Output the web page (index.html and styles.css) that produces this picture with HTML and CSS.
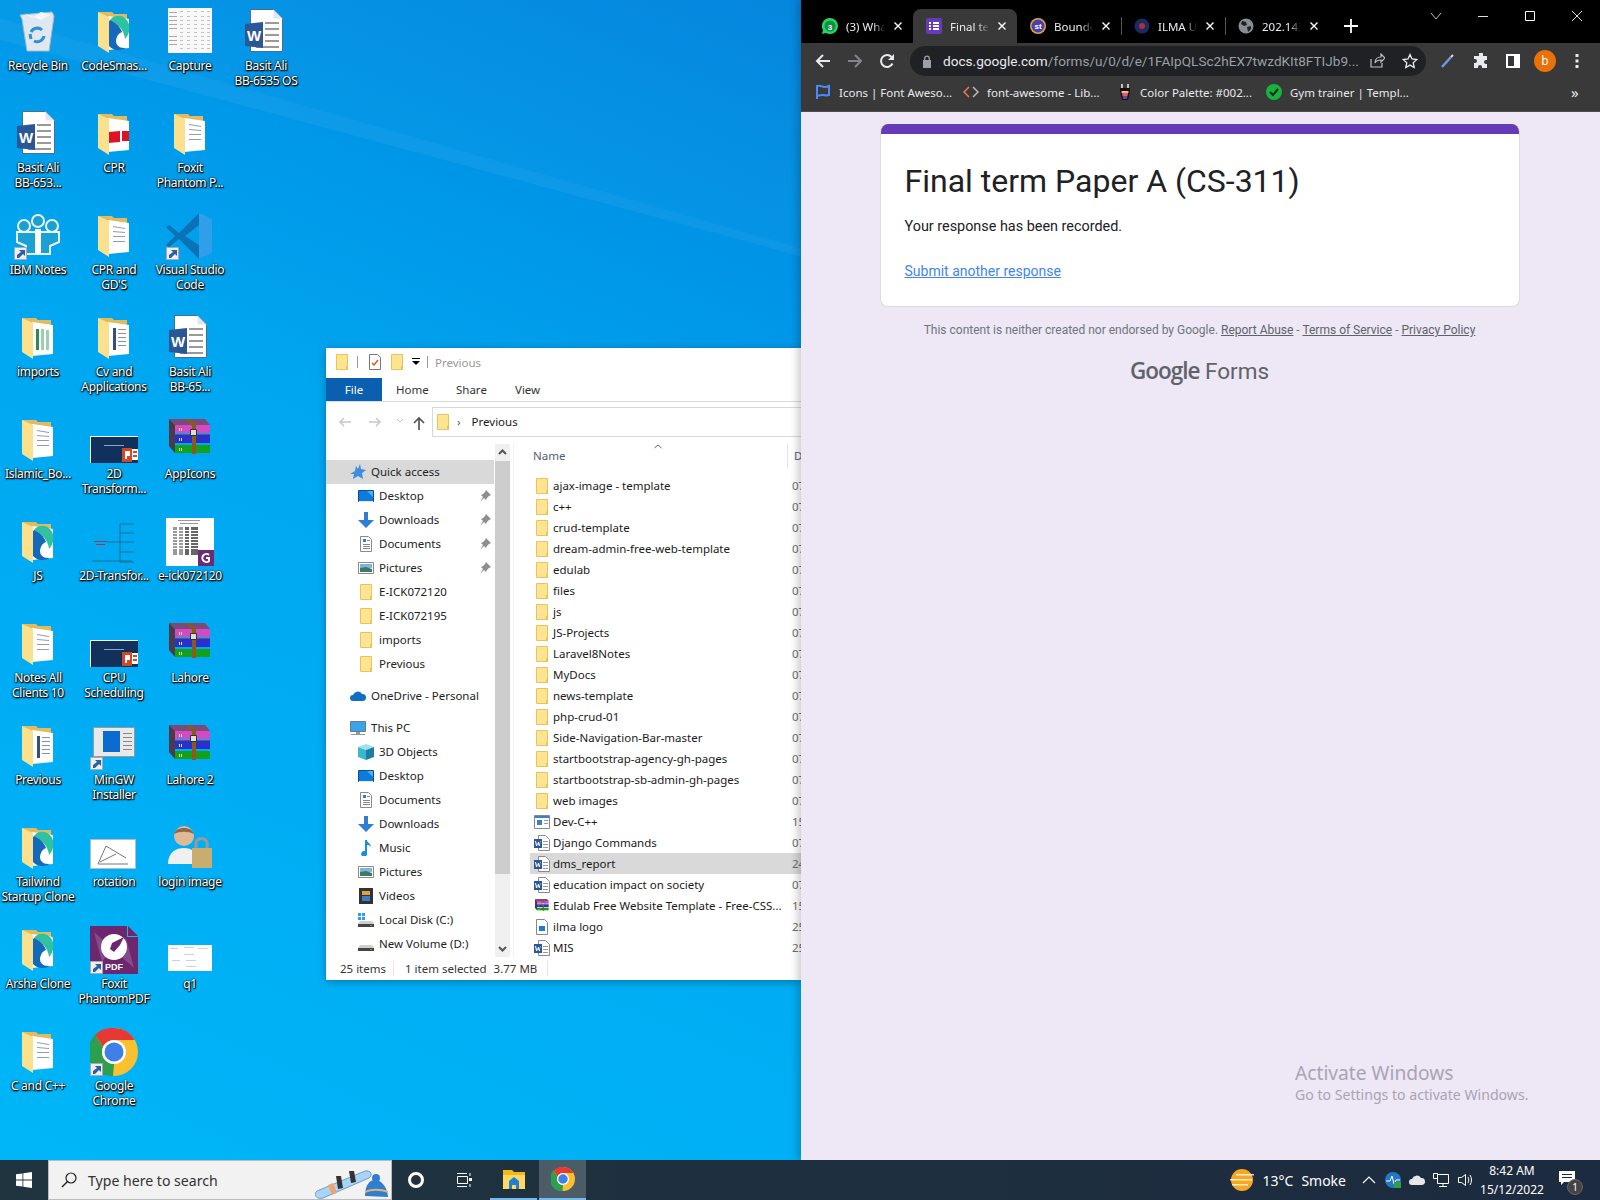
FILE: index.html
```html
<!DOCTYPE html>
<html lang="en">
<head>
  <meta charset="UTF-8" />
  <title>Desktop</title>
  <link rel="stylesheet" href="styles.css">
</head>
<body>
  <!-- shared icons -->
  <svg class="sprite" aria-hidden="true">
    <symbol id="folder-back" viewBox="0 0 48 48">
      <path fill="#e3bb5e" d="M8 4h14l2 2h13v32H8z"/>
    </symbol>
    <symbol id="folder-front" viewBox="0 0 48 48">
      <path fill="#fbe08e" d="M8 4l11 5v36L8 38z"/>
    </symbol>
    <symbol id="edge-mark" viewBox="0 0 48 48">
      <path fill="#2fc2a0" d="M20 12c4-6 14-6 18 2 3 6 1 13-3 17-1-8-6-15-15-19z"/>
      <path fill="#1668b8" d="M20 12c-5 5-6 16-2 24 2 4 6 6 10 6 3 0 6-1 8-2-8 1-12-5-9-11 1-3 3-4 5-5-2-6-7-10-12-12z"/>
    </symbol>
    <symbol id="thumb-folder" viewBox="0 0 48 48">
      <use href="#folder-back"/>
      <path fill="#fff" d="M18 8l21 3v29l-21 2z"/>
      <path fill="#8f9db0" d="M23 14l12 2v1l-12-2zm0 5l12 1v1l-12-1zm0 5h12v1H23zm0 5h12v1H23z"/>
      <use href="#folder-front"/>
    </symbol>
    <symbol id="folder-edge" viewBox="0 0 48 48">
      <use href="#folder-back"/>
      <path fill="#fff" d="M18 8l21 3v29l-21 2z"/>
      <use href="#edge-mark"/>
      <use href="#folder-front"/>
    </symbol>
    <symbol id="folder-pdf" viewBox="0 0 48 48">
      <use href="#folder-back"/>
      <path fill="#fff" d="M18 8l21 3v29l-21 2z"/>
      <path fill="#dc1423" d="M18 22l12-1v11l-12 1zm14-1h7v10h-7z"/>
      <use href="#folder-front"/>
    </symbol>
    <symbol id="folder-sheet" viewBox="0 0 48 48">
      <use href="#folder-back"/>
      <path fill="#fff" d="M18 8l21 3v29l-21 2z"/>
      <path fill="#2e8b57" d="M22 15h3v21h-3z"/>
      <path fill="#9ccfae" d="M27 15h3v21h-3zm5 1h3v20h-3z"/>
      <use href="#folder-front"/>
    </symbol>
    <symbol id="folder-doc" viewBox="0 0 48 48">
      <use href="#folder-back"/>
      <path fill="#fff" d="M18 8l21 3v29l-21 2z"/>
      <path fill="#33507f" d="M23 14h3v22h-3z"/>
      <path fill="#8590a0" d="M28 15h8v1h-8zm0 4h8v1h-8zm0 4h8v1h-8zm0 4h8v1h-8zm0 4h8v1h-8z"/>
      <use href="#folder-front"/>
    </symbol>
    <symbol id="word" viewBox="0 0 48 48">
      <path fill="#fff" stroke="#4a6d96" d="M8.500 1.500h23l9 9v33h-32z"/>
      <path fill="#dfe6ef" d="M31.500 1.500v9h9z"/>
      <path fill="#9a9a9a" d="M23 14h14v2H23zm0 6h14v2H23zm0 6h14v2H23zm0 6h14v2H23zm-9 6h23v2H14z"/>
      <path fill="#2b5797" d="M3 16l18-2v26l-18-2z"/>
      <text x="12" y="33" class="word-w">W</text>
    </symbol>
    <symbol id="rar" viewBox="0 0 48 48">
      <path fill="#7d4a78" d="M3 3h36l5 6H9z"/>
      <path fill="#d04bc4" d="M9 9h35v8H9z"/>
      <path fill="#5a5a7a" d="M3 13l6 5h35v1H9z"/>
      <path fill="#2a2fd0" d="M9 19h35v8H9z"/>
      <path fill="#14a01c" d="M9 29h35v8H9z"/>
      <path fill="#4a3a4a" d="M3 3l6 6v28l-6-7z"/>
      <path fill="#e8e070" d="M13 12h1v3h-1zm2 0h1v3h-1zm-2 10h1v3h-1zm2 0h1v3h-1zm-2 10h1v3h-1zm2 0h1v3h-1z"/>
      <path fill="#8a5a1c" d="M20 3h4l6 6v29h-4V10z"/>
      <path fill="#ddd" stroke="#333" d="M24.500 13.500h6v6h-6z"/>
    </symbol>
    <symbol id="pptx" viewBox="0 0 48 48">
      <path fill="#fff" d="M0 20h48v27H0z"/>
      <path fill="#12305c" d="M1 21h47v26H1z"/>
      <path fill="#8fa3bf" d="M14 29h20v1H14z"/>
      <path fill="#d24726" d="M32 32h10v14H32z"/>
      <path fill="#fff" d="M42 33h6v11h-6z"/>
      <path fill="#d24726" d="M43 35h4v2h-4zm0 4h4v2h-4z"/>
      <path fill="#fff" d="M35 35h5v5h-3v3h-2z"/>
    </symbol>
    <symbol id="diagram" viewBox="0 0 48 48">
      <path fill="none" stroke="#1f6f94" d="M30 6h14M30 6v38M30 15h14M30 24H16M30 24h14M30 34h14M30 44h14M2 43h40"/>
      <path fill="#b03050" d="M4 23h12v1H4zm2 3h9v1H6z"/>
    </symbol>
    <symbol id="foxit-thumb" viewBox="0 0 48 48">
      <path fill="#fff" d="M0 0h48v48H0z"/>
      <path fill="#999" d="M12 2h22v1H12zM14 5h18v1H14z"/>
      <path fill="#9a9a9a" d="M7 9h4v28H7zm6 0h4v28h-4z"/>
      <path fill="#666" d="M19 9h4v28h-4zm6 0h7v28h-7z"/>
      <path fill="#fff" d="M7 12h25v1H7zm0 3h25v1H7zm0 3h25v1H7zm0 3h25v1H7zm0 3h25v1H7zm0 3h25v1H7zm0 3h25v1H7z"/>
      <path fill="#6d2a75" d="M32 32h16v16H32z"/>
      <path fill="none" stroke="#fff" stroke-width="2" d="M43 37a4 4 0 1 0 0 6v-3h-3"/>
    </symbol>
    <symbol id="foxit-app" viewBox="0 0 48 48">
      <path fill="#6c276f" d="M0 0h38l10 10v38H0z"/>
      <path fill="#854a88" d="M4 6l18 16-10 14zM44 42L26 26l10-14z"/>
      <path fill="#26b1d9" d="M38 0v10h10v1H37V0z"/>
      <circle cx="24" cy="21" r="13" fill="#fff"/>
      <path fill="#6c276f" d="M22 17l12-6-4 8-6 7-4-3z"/>
      <text x="15" y="44" class="pdf-tag">PDF</text>
    </symbol>
    <symbol id="chrome" viewBox="0 0 48 48">
      <circle cx="24" cy="24" r="24" fill="#fbc02d"/>
      <path fill="#e53935" d="M24 0a24 24 0 0 1 20.800 12H24a12 12 0 0 0-11 7L5 7A24 24 0 0 1 24 0z"/>
      <path fill="#2e9e4f" d="M5 7l8 12a12 12 0 0 0 11 17l-1 12A24 24 0 0 1 5 7z"/>
      <circle cx="24" cy="24" r="12" fill="#fff"/>
      <circle cx="24" cy="24" r="9.500" fill="#3f7fe8"/>
    </symbol>
    <symbol id="shortcut" viewBox="0 0 13 13">
      <path fill="#eee" stroke="#aaa" d="M.5.500h12v12H.5z"/>
      <path fill="#2c5ea8" d="M5 3h6v6L9 7 5 11H3V8l4-3z"/>
    </symbol>
    <symbol id="fold16" viewBox="0 0 16 16">
      <path fill="#ffe591" stroke="#e9c35f" d="M2.500.5h11v15h-11z"/>
      <path fill="#e9c35f" d="M12 12h2v4h-2z"/>
    </symbol>
    <symbol id="word16" viewBox="0 0 16 16">
      <path fill="#fff" stroke="#8a8a8a" d="M4.500.5h7l4 4v11h-11z"/>
      <path fill="#9a9a9a" d="M9 6h5v1H9zm0 3h5v1H9zm0 3h5v1H9z"/>
      <path fill="#2b5797" d="M0 4h8v9H0z"/>
      <path fill="#fff" d="M1 6h1l1 4 1-3h1l1 3 1-4H6.500L6 11H5L4 9l-1 2H2z"/>
    </symbol>
    <symbol id="desk16" viewBox="0 0 16 16">
      <path fill="#0c7cdc" stroke="#0a4f8c" d="M.5 2.500h15v11H.5z"/>
      <path fill="#54adf2" d="M9 3h6v6z"/>
      <path fill="#e8e8e8" d="M1 13h14v1H1z"/>
    </symbol>
    <symbol id="down16" viewBox="0 0 16 16">
      <path fill="#2d7fd3" d="M6 0h4v8h6l-8 8-8-8h6z"/>
    </symbol>
    <symbol id="docs16" viewBox="0 0 16 16">
      <path fill="#fff" stroke="#8a8a8a" d="M2.500.5h8l3 3v12h-11z"/>
      <path fill="#2d7fd3" d="M5 3h3v3H5z"/>
      <path fill="#888" d="M5 8h7v1H5zm0 2h7v1H5zm0 2h7v1H5zm4-8h3v1H9z"/>
    </symbol>
    <symbol id="pics16" viewBox="0 0 16 16">
      <path fill="#fff" stroke="#8a8a8a" d="M.5 2.500h15v11H.5z"/>
      <path fill="#7fb4dd" d="M2 4h12v4H2z"/>
      <path fill="#3e7a63" d="M2 8l6-1 6 2v3H2z"/>
    </symbol>
    <symbol id="star16" viewBox="0 0 16 16">
      <path fill="#3b8ee0" d="M10 0l1 5 5 1-4 3 1 6-5-3-5 3 1-5H0l5-3 1-5 2 3z"/>
    </symbol>
    <symbol id="pin" viewBox="0 0 12 12">
      <path fill="#8f8f8f" d="M7 0l5 5-2 1-2 2-1 2-2-2-4 4 3-5-2-2 2-1 2-2z"/>
    </symbol>
    <symbol id="tab-close" viewBox="0 0 10 10">
      <path fill="none" stroke="#fff" stroke-width="1.400" d="M1.500 1.500l7 7m0-7l-7 7"/>
    </symbol>
  </svg>

  <svg class="beam" viewBox="0 0 800 1160" preserveAspectRatio="none" aria-hidden="true">
    <path fill="#fff" fill-opacity=".05" d="M0 18L800 248v8L0 40z"/>
    <path fill="#fff" fill-opacity=".02" d="M0 0h800v248L0 18z"/>
  </svg>

  <div class="desktop">
    <div class="desk-col">
      <div class="desk-item"><svg class="desk-ic" viewBox="0 0 48 48"><path fill="#dfe8ee" stroke="#aab8c2" d="M6 7l32-3 2 4-5 35H13L8 11z"/><path fill="#f3f7fa" d="M10 5l8 5 9-6 9 3-9 5z"/><path fill="none" stroke="#2f8fd8" stroke-width="3" d="M17 24a7 7 0 0 1 11-2M30 28a7 7 0 0 1-10 5M17 31l-1-5"/></svg><span class="desk-label">Recycle Bin</span></div>
      <div class="desk-item"><svg class="desk-ic"><use href="#word"/></svg><span class="desk-label">Basit Ali<br>BB-653...</span></div>
      <div class="desk-item"><svg class="desk-ic" viewBox="0 0 48 48"><g fill="#1ba0d4" stroke="#e8f6fb" stroke-width="2"><circle cx="10" cy="14" r="6"/><circle cx="38" cy="14" r="6"/><circle cx="24" cy="9" r="6"/><path d="M3 20h42v10l-9 4v8H12v-8l-9-4z"/></g><path fill="#fff" d="M21 17h6v25h-6z"/></svg><svg class="desk-link"><use href="#shortcut"/></svg><span class="desk-label">IBM Notes</span></div>
      <div class="desk-item"><svg class="desk-ic"><use href="#folder-sheet"/></svg><span class="desk-label">imports</span></div>
      <div class="desk-item"><svg class="desk-ic"><use href="#thumb-folder"/></svg><span class="desk-label">Islamic_Bo...</span></div>
      <div class="desk-item"><svg class="desk-ic"><use href="#folder-edge"/></svg><span class="desk-label">JS</span></div>
      <div class="desk-item"><svg class="desk-ic"><use href="#thumb-folder"/></svg><span class="desk-label">Notes All<br>Clients 10</span></div>
      <div class="desk-item"><svg class="desk-ic"><use href="#folder-doc"/></svg><span class="desk-label">Previous</span></div>
      <div class="desk-item"><svg class="desk-ic"><use href="#folder-edge"/></svg><span class="desk-label">Tailwind<br>Startup Clone</span></div>
      <div class="desk-item"><svg class="desk-ic"><use href="#folder-edge"/></svg><span class="desk-label">Arsha Clone</span></div>
      <div class="desk-item"><svg class="desk-ic"><use href="#thumb-folder"/></svg><span class="desk-label">C and C++</span></div>
    </div>
    <div class="desk-col">
      <div class="desk-item"><svg class="desk-ic"><use href="#folder-edge"/></svg><span class="desk-label">CodeSmas...</span></div>
      <div class="desk-item"><svg class="desk-ic"><use href="#folder-pdf"/></svg><span class="desk-label">CPR</span></div>
      <div class="desk-item"><svg class="desk-ic"><use href="#thumb-folder"/></svg><span class="desk-label">CPR and<br>GD'S</span></div>
      <div class="desk-item"><svg class="desk-ic"><use href="#folder-doc"/></svg><span class="desk-label">Cv and<br>Applications</span></div>
      <div class="desk-item"><svg class="desk-ic"><use href="#pptx"/></svg><span class="desk-label">2D<br>Transform...</span></div>
      <div class="desk-item"><svg class="desk-ic"><use href="#diagram"/></svg><span class="desk-label">2D-Transfor...</span></div>
      <div class="desk-item"><svg class="desk-ic"><use href="#pptx"/></svg><span class="desk-label">CPU<br>Scheduling</span></div>
      <div class="desk-item"><svg class="desk-ic" viewBox="0 0 48 48"><path fill="#e9e9e9" stroke="#999" d="M3.500 5.500h41v29h-41z"/><path fill="#0a6ccf" d="M13 9h17v21H13z"/><path fill="#888" d="M33 11h9v1h-9zm0 4h9v1h-9zm0 4h9v1h-9zm0 4h9v1h-9zm0 4h9v1h-9z"/></svg><svg class="desk-link"><use href="#shortcut"/></svg><span class="desk-label">MinGW<br>Installer</span></div>
      <div class="desk-item"><svg class="desk-ic" viewBox="0 0 48 48"><path fill="#fff" stroke="#bbb" d="M.5 15.500h45v29H.5z"/><path fill="none" stroke="#777" d="M8 40l8-18m-8 18h30M10 38l16-8M16 22l20 12"/></svg><span class="desk-label">rotation</span></div>
      <div class="desk-item"><svg class="desk-ic"><use href="#foxit-app"/></svg><svg class="desk-link"><use href="#shortcut"/></svg><span class="desk-label">Foxit<br>PhantomPDF</span></div>
      <div class="desk-item"><svg class="desk-ic"><use href="#chrome"/></svg><svg class="desk-link"><use href="#shortcut"/></svg><span class="desk-label">Google<br>Chrome</span></div>
    </div>
    <div class="desk-col">
      <div class="desk-item"><svg class="desk-ic" viewBox="0 0 48 48"><path fill="#f8f8f8" d="M2 0h44v45H2z"/><path fill="#aaa" d="M3 4h8v1H3zm0 4h8v1H3zm0 4h8v1H3zm0 4h8v1H3zm0 4h8v1H3zm0 8h8v1H3zm0 4h8v1H3zm0 4h8v1H3z"/><path fill="#c4c4c4" d="M14 3h3v1h-3zm7 0h3v1h-3zm7 0h3v1h-3zm7 0h3v1h-3zm6 0h3v1h-3zM14 8h3v1h-3zm7 0h3v1h-3zm7 0h3v1h-3zm7 0h3v1h-3zm6 0h3v1h-3zM14 12h3v1h-3zm7 0h3v1h-3zm7 0h3v1h-3zm7 0h3v1h-3zm6 0h3v1h-3zM14 16h3v1h-3zm7 0h3v1h-3zm7 0h3v1h-3zm7 0h3v1h-3zm6 0h3v1h-3zM14 20h3v1h-3zm7 0h3v1h-3zm7 0h3v1h-3zm7 0h3v1h-3zm6 0h3v1h-3zM14 24h3v1h-3zm7 0h3v1h-3zm7 0h3v1h-3zm7 0h3v1h-3zm6 0h3v1h-3zM14 28h3v1h-3zm7 0h3v1h-3zm7 0h3v1h-3zm7 0h3v1h-3zm6 0h3v1h-3zM14 32h3v1h-3zm7 0h3v1h-3zm7 0h3v1h-3zm7 0h3v1h-3zm6 0h3v1h-3zM14 36h3v1h-3zm7 0h3v1h-3zm7 0h3v1h-3zm7 0h3v1h-3zm6 0h3v1h-3zM14 40h3v1h-3zm7 0h3v1h-3zm7 0h3v1h-3zm7 0h3v1h-3zm6 0h3v1h-3z"/></svg><span class="desk-label">Capture</span></div>
      <div class="desk-item"><svg class="desk-ic"><use href="#thumb-folder"/></svg><span class="desk-label">Foxit<br>Phantom P...</span></div>
      <div class="desk-item"><svg class="desk-ic" viewBox="0 0 48 48"><path fill="#2e9fe8" d="M33 1l13 6v34l-13 6z"/><path fill="#0a73b8" d="M33 1L13 21 3 13l-3 2 9 9-9 9 3 2 10-8 20 20V33L19 24 33 13z"/></svg><svg class="desk-link"><use href="#shortcut"/></svg><span class="desk-label">Visual Studio<br>Code</span></div>
      <div class="desk-item"><svg class="desk-ic"><use href="#word"/></svg><span class="desk-label">Basit Ali<br>BB-65...</span></div>
      <div class="desk-item"><svg class="desk-ic"><use href="#rar"/></svg><span class="desk-label">AppIcons</span></div>
      <div class="desk-item"><svg class="desk-ic"><use href="#foxit-thumb"/></svg><span class="desk-label">e-ick072120</span></div>
      <div class="desk-item"><svg class="desk-ic"><use href="#rar"/></svg><span class="desk-label">Lahore</span></div>
      <div class="desk-item"><svg class="desk-ic"><use href="#rar"/></svg><span class="desk-label">Lahore 2</span></div>
      <div class="desk-item"><svg class="desk-ic" viewBox="0 0 48 48"><circle cx="18" cy="12" r="10" fill="#e0b998"/><path fill="#8a6a4a" d="M8 10c2-8 18-8 20 0-6-3-14-3-20 0z"/><path fill="#eef0f2" d="M2 40c0-12 8-16 16-16s14 4 14 16z"/><path fill="none" stroke="#999" stroke-width="3" d="M30 24v-6a6 6 0 0 1 11 0v6"/><path fill="#c9ad6e" d="M26 24h20v20H26z"/></svg><span class="desk-label">login image</span></div>
      <div class="desk-item"><svg class="desk-ic" viewBox="0 0 48 48"><path fill="#fff" d="M2 19h44v26H2z"/><path fill="#cfcbe8" d="M4 22h8v1H4zm14-1h10v1H18zm14 1h10v1H32zM6 34h8v1H6zm14 0h10v1H20zm-2-6h10v1H18zm2 12h10v1H20z"/></svg><span class="desk-label">q1</span></div>
    </div>
    <div class="desk-col">
      <div class="desk-item"><svg class="desk-ic"><use href="#word"/></svg><span class="desk-label">Basit Ali<br>BB-6535 OS</span></div>
    </div>
  </div>

  <div class="explorer">
    <div class="ex-title">
      <svg class="ic16"><use href="#fold16"/></svg>
      <span class="ex-sep"></span>
      <svg class="ic16 qat-check" viewBox="0 0 16 16"><path fill="#fff" stroke="#777" d="M2.500.5h8l3 3v12h-11z"/><path fill="none" stroke="#e2561c" stroke-width="1.500" d="M5 9l2 2 4-5"/></svg>
      <svg class="ic16 qat-folder" viewBox="0 0 16 16"><use href="#fold16"/></svg>
      <svg class="qat-arrow" viewBox="0 0 8 8"><path d="M0 0h8v1H0zm0 3h8L4 7z"/></svg>
      <span class="ex-sep"></span>
      <span class="ex-title-text">Previous</span>
    </div>
    <div class="ex-ribbon">
      <span class="ex-file">File</span>
      <span class="ex-tab ex-home">Home</span>
      <span class="ex-tab ex-share">Share</span>
      <span class="ex-tab">View</span>
    </div>
    <div class="ex-bar">
      <svg class="nav-arrow" viewBox="0 0 14 12"><path fill="none" stroke="#c8c8c8" stroke-width="1.500" d="M13 6H2m4-4L2 6l4 4"/></svg>
      <svg class="nav-arrow" viewBox="0 0 14 12"><path fill="none" stroke="#c8c8c8" stroke-width="1.500" d="M1 6h11M8 2l4 4-4 4"/></svg>
      <svg class="nav-drop" viewBox="0 0 8 6"><path fill="none" stroke="#c8c8c8" d="M1 1l3 3 3-3"/></svg>
      <svg class="nav-up" viewBox="0 0 12 14"><path fill="none" stroke="#555" stroke-width="1.700" d="M6 14V2M1 7l5-5 5 5"/></svg>
      <div class="ex-path">
        <svg class="ic16"><use href="#fold16"/></svg>
        <span class="path-chev">›</span>
        <span class="path-name">Previous</span>
      </div>
    </div>
    <div class="ex-body">
      <div class="ex-nav">
        <div class="nav-row nav-root nav-selected"><svg class="ic16"><use href="#star16"/></svg>Quick access</div>
        <div class="nav-row"><svg class="ic16"><use href="#desk16"/></svg><span class="nav-name">Desktop</span><svg class="pin"><use href="#pin"/></svg></div>
        <div class="nav-row"><svg class="ic16"><use href="#down16"/></svg><span class="nav-name">Downloads</span><svg class="pin"><use href="#pin"/></svg></div>
        <div class="nav-row"><svg class="ic16"><use href="#docs16"/></svg><span class="nav-name">Documents</span><svg class="pin"><use href="#pin"/></svg></div>
        <div class="nav-row"><svg class="ic16"><use href="#pics16"/></svg><span class="nav-name">Pictures</span><svg class="pin"><use href="#pin"/></svg></div>
        <div class="nav-row"><svg class="ic16"><use href="#fold16"/></svg>E-ICK072120</div>
        <div class="nav-row"><svg class="ic16"><use href="#fold16"/></svg>E-ICK072195</div>
        <div class="nav-row"><svg class="ic16"><use href="#fold16"/></svg>imports</div>
        <div class="nav-row"><svg class="ic16"><use href="#fold16"/></svg>Previous</div>
        <div class="nav-row nav-root nav-group"><svg class="ic16" viewBox="0 0 16 16"><path fill="#0f6fc6" d="M3 13a3 3 0 0 1 0-6 5 5 0 0 1 9-1 3.500 3.500 0 0 1 1 7z"/></svg>OneDrive - Personal</div>
        <div class="nav-row nav-root nav-group"><svg class="ic16" viewBox="0 0 16 16"><path fill="#35a5ec" stroke="#777" d="M.5 1.500h15v10H.5z"/><path fill="#999" d="M6 12h4v2H6zM1 14h14v1H1z"/></svg>This PC</div>
        <div class="nav-row"><svg class="ic16" viewBox="0 0 16 16"><path fill="#9fe3ea" d="M8 0l8 3-8 3-8-3z"/><path fill="#3bb8d0" d="M0 3l8 3v10l-8-3z"/><path fill="#1b7ea6" d="M16 3L8 6v10l8-3z"/></svg>3D Objects</div>
        <div class="nav-row"><svg class="ic16"><use href="#desk16"/></svg>Desktop</div>
        <div class="nav-row"><svg class="ic16"><use href="#docs16"/></svg>Documents</div>
        <div class="nav-row"><svg class="ic16"><use href="#down16"/></svg>Downloads</div>
        <div class="nav-row"><svg class="ic16" viewBox="0 0 16 16"><path fill="#1d8be0" d="M7 0h2c0 3 4 3 4 7-1-2-3-2-4-2v8a3 3 0 1 1-2-2z"/></svg>Music</div>
        <div class="nav-row"><svg class="ic16"><use href="#pics16"/></svg>Pictures</div>
        <div class="nav-row"><svg class="ic16" viewBox="0 0 16 16"><path fill="#333" d="M1 0h14v16H1z"/><path fill="#d9a441" d="M4 3h8v4H4z"/><path fill="#3a7fc4" d="M4 8h8v5H4z"/></svg>Videos</div>
        <div class="nav-row"><svg class="ic16" viewBox="0 0 16 16"><path fill="#2a9df4" d="M0 1h3v3H0zm4 0h3v3H4zM0 5h3v3H0zm4 0h3v3H4z"/><path fill="#cfcfcf" d="M2 9h12l2 3H0z"/><path fill="#444" d="M0 12h16v3H0z"/><path fill="#4caf50" d="M12 13h2v1h-2z"/></svg>Local Disk (C:)</div>
        <div class="nav-row"><svg class="ic16" viewBox="0 0 16 16"><path fill="#cfcfcf" d="M2 9h12l2 3H0z"/><path fill="#444" d="M0 12h16v3H0z"/><path fill="#4caf50" d="M12 13h2v1h-2z"/></svg>New Volume (D:)</div>
      </div>
      <div class="ex-scroll">
        <svg class="scroll-btn" viewBox="0 0 15 17"><path fill="none" stroke="#555" stroke-width="2" d="M4 10l3.500-3.500L11 10"/></svg>
        <div class="scroll-thumb"></div>
        <div class="scroll-rest"></div>
        <svg class="scroll-btn" viewBox="0 0 15 17"><path fill="none" stroke="#555" stroke-width="2" d="M4 7l3.500 3.500L11 7"/></svg>
      </div>
      <div class="ex-list">
        <div class="list-head">
          <div class="head-name">Name<svg class="sort-mark" viewBox="0 0 8 5"><path fill="none" stroke="#666" d="M.5 4L4 1l3.500 3"/></svg></div>
          <div class="head-date">D</div>
        </div>
        <div class="file"><svg class="ic16"><use href="#fold16"/></svg><span class="file-name">ajax-image - template</span><span class="file-date">07</span></div>
        <div class="file"><svg class="ic16"><use href="#fold16"/></svg><span class="file-name">c++</span><span class="file-date">07</span></div>
        <div class="file"><svg class="ic16"><use href="#fold16"/></svg><span class="file-name">crud-template</span><span class="file-date">07</span></div>
        <div class="file"><svg class="ic16"><use href="#fold16"/></svg><span class="file-name">dream-admin-free-web-template</span><span class="file-date">07</span></div>
        <div class="file"><svg class="ic16"><use href="#fold16"/></svg><span class="file-name">edulab</span><span class="file-date">07</span></div>
        <div class="file"><svg class="ic16"><use href="#fold16"/></svg><span class="file-name">files</span><span class="file-date">07</span></div>
        <div class="file"><svg class="ic16"><use href="#fold16"/></svg><span class="file-name">js</span><span class="file-date">07</span></div>
        <div class="file"><svg class="ic16"><use href="#fold16"/></svg><span class="file-name">JS-Projects</span><span class="file-date">07</span></div>
        <div class="file"><svg class="ic16"><use href="#fold16"/></svg><span class="file-name">Laravel8Notes</span><span class="file-date">07</span></div>
        <div class="file"><svg class="ic16"><use href="#fold16"/></svg><span class="file-name">MyDocs</span><span class="file-date">07</span></div>
        <div class="file"><svg class="ic16"><use href="#fold16"/></svg><span class="file-name">news-template</span><span class="file-date">07</span></div>
        <div class="file"><svg class="ic16"><use href="#fold16"/></svg><span class="file-name">php-crud-01</span><span class="file-date">07</span></div>
        <div class="file"><svg class="ic16"><use href="#fold16"/></svg><span class="file-name">Side-Navigation-Bar-master</span><span class="file-date">07</span></div>
        <div class="file"><svg class="ic16"><use href="#fold16"/></svg><span class="file-name">startbootstrap-agency-gh-pages</span><span class="file-date">07</span></div>
        <div class="file"><svg class="ic16"><use href="#fold16"/></svg><span class="file-name">startbootstrap-sb-admin-gh-pages</span><span class="file-date">07</span></div>
        <div class="file"><svg class="ic16"><use href="#fold16"/></svg><span class="file-name">web images</span><span class="file-date">07</span></div>
        <div class="file"><svg class="ic16" viewBox="0 0 16 16"><path fill="#fff" stroke="#888" d="M.5 1.500h15v13H.5z"/><path fill="#3f7fc4" d="M1 2h14v2H1zM3 6h5v5H3z"/><path fill="#999" d="M10 6h4v1h-4zm0 3h4v1h-4z"/></svg><span class="file-name">Dev-C++</span><span class="file-date">15</span></div>
        <div class="file"><svg class="ic16"><use href="#word16"/></svg><span class="file-name">Django Commands</span><span class="file-date">07</span></div>
        <div class="file file-selected"><svg class="ic16"><use href="#word16"/></svg><span class="file-name">dms_report</span><span class="file-date">24</span></div>
        <div class="file"><svg class="ic16"><use href="#word16"/></svg><span class="file-name">education impact on society</span><span class="file-date">07</span></div>
        <div class="file"><svg class="ic16"><use href="#rar"/></svg><span class="file-name">Edulab Free Website Template - Free-CSS...</span><span class="file-date">15</span></div>
        <div class="file"><svg class="ic16" viewBox="0 0 16 16"><path fill="#fff" stroke="#888" d="M2.500.5h8l3 3v12h-11z"/><path fill="#1b7ed6" d="M5 7h6v5H5z"/></svg><span class="file-name">ilma logo</span><span class="file-date">25</span></div>
        <div class="file"><svg class="ic16"><use href="#word16"/></svg><span class="file-name">MIS</span><span class="file-date">25</span></div>
      </div>
    </div>
    <div class="ex-status">
      <span class="status-count">25 items</span>
      <span class="status-sel">1 item selected</span>
      <span class="status-size">3.77 MB</span>
    </div>
  </div>

  <div class="browser">
    <div class="tabstrip">
      <div class="tab"><svg class="tab-ic" viewBox="0 0 16 16"><path fill="#25d366" d="M8 0a8 8 0 0 1 0 16 8 8 0 0 1-4-1l-4 1 1-4A8 8 0 0 1 8 0z"/><circle cx="8" cy="8" r="5.500" fill="#0f8f45"/><text x="8" y="11.500" class="tab-badge">3</text></svg><span class="tab-title">(3) Wha</span><svg class="tab-x"><use href="#tab-close"/></svg></div>
      <div class="tab tab-active"><svg class="tab-ic" viewBox="0 0 16 16"><rect width="16" height="16" rx="2" fill="#673ab7"/><path fill="#fff" d="M3 4h2v2H3zm4 0h6v2H7zM3 7h2v2H3zm4 0h6v2H7zm-4 3h2v2H3zm4 0h6v2H7z"/></svg><span class="tab-title">Final te</span><svg class="tab-x"><use href="#tab-close"/></svg></div>
      <div class="tab tab-sep"><svg class="tab-ic" viewBox="0 0 16 16"><circle cx="8" cy="8" r="8" fill="#e0a83c"/><circle cx="8" cy="8" r="6.500" fill="#4a3fb0"/><text x="8" y="10.500" class="tab-badge">st</text></svg><span class="tab-title">Bounde</span><svg class="tab-x"><use href="#tab-close"/></svg></div>
      <div class="tab tab-sep"><svg class="tab-ic" viewBox="0 0 16 16"><circle cx="8" cy="8" r="7.500" fill="#1b2a63"/><circle cx="8" cy="8" r="3" fill="#b32c3a"/></svg><span class="tab-title">ILMA U</span><svg class="tab-x"><use href="#tab-close"/></svg></div>
      <div class="tab tab-sep"><svg class="tab-ic" viewBox="0 0 16 16"><circle cx="8" cy="8" r="7.500" fill="#8a8d91"/><path fill="#202124" d="M4 3l4 1 1 3-3 1-3-2zm5 6l4-1 0 3-3 3z"/></svg><span class="tab-title">202.143</span><svg class="tab-x"><use href="#tab-close"/></svg></div>
      <svg class="new-tab" viewBox="0 0 14 14"><path fill="none" stroke="#fff" stroke-width="1.800" d="M7 0v14M0 7h14"/></svg>
      <div class="win-ctrl">
        <svg class="ctrl-ic" viewBox="0 0 12 12"><path fill="none" stroke="#bbb" d="M1 3l5 6 5-6"/></svg>
        <svg class="ctrl-ic" viewBox="0 0 12 12"><path stroke="#ddd" d="M1 6.500h10"/></svg>
        <svg class="ctrl-ic" viewBox="0 0 12 12"><path fill="none" stroke="#fff" d="M1.500 1.500h9v9h-9z"/></svg>
        <svg class="ctrl-ic" viewBox="0 0 12 12"><path fill="none" stroke="#ddd" d="M1 1l10 10M11 1L1 11"/></svg>
      </div>
    </div>
    <div class="toolbar">
      <svg class="tool-ic tool-back" viewBox="0 0 16 16"><path fill="none" stroke="#e8eaed" stroke-width="2" d="M15 8H2m6-6L2 8l6 6"/></svg>
      <svg class="tool-ic tool-fwd" viewBox="0 0 16 16"><path fill="none" stroke="#80868b" stroke-width="2" d="M1 8h13M8 2l6 6-6 6"/></svg>
      <svg class="tool-ic tool-reload" viewBox="0 0 16 16"><path fill="none" stroke="#e8eaed" stroke-width="2" d="M13.500 10.500A6 6 0 1 1 12.500 4"/><path fill="#e8eaed" d="M15 1v6H9z"/></svg>
      <div class="omnibox">
        <svg class="lock" viewBox="0 0 10 13"><path fill="#9aa0a6" d="M1 5h8v8H1z"/><path fill="none" stroke="#9aa0a6" stroke-width="1.300" d="M2.700 5V3.500a2.300 2.300 0 0 1 4.600 0V5"/></svg>
        <span class="url"><span class="url-host">docs.google.com</span>/forms/u/0/d/e/1FAIpQLSc2hEX7twzdKIt8FTIJb9...</span>
        <svg class="omni-ic" viewBox="0 0 16 16"><path fill="none" stroke="#bdc1c6" stroke-width="1.200" d="M2 6v8h11V10M6 10c0-4 3-6 6-6V1l4 4-4 4V7c-3 0-5 1-6 3z"/></svg>
        <svg class="omni-ic" viewBox="0 0 16 16"><path fill="none" stroke="#e8eaed" stroke-width="1.300" d="M8 1.500l2 4.500 4.800.5-3.600 3.200 1 4.800L8 12.100l-4.200 2.400 1-4.800L1.200 6.500 6 6z"/></svg>
      </div>
      <svg class="tool-ic tool-pen" viewBox="0 0 16 16"><path stroke="#6e9be0" stroke-width="2.500" d="M3 14l9-10"/><path stroke="#ddd" stroke-width="2" d="M12 4l2-2"/></svg>
      <svg class="tool-ic tool-ext" viewBox="0 0 16 16"><path fill="#e8eaed" d="M6 1a2 2 0 0 1 4 0v2h4v4h-1a2 2 0 0 0 0 4h1v4H9v-1a2 2 0 0 0-4 0v1H1v-5h1a2 2 0 0 0 0-4H1V3h5z"/></svg>
      <svg class="tool-ic tool-side" viewBox="0 0 16 16"><path fill="#fff" d="M1 1h14v14H1z"/><path fill="#35363a" d="M3 3h6v10H3z"/></svg>
      <span class="avatar">b</span>
      <svg class="tool-ic tool-dots" viewBox="0 0 4 16"><path fill="#e8eaed" d="M.5 1h3v3h-3zm0 5.500h3v3h-3zm0 5.500h3v3h-3z"/></svg>
    </div>
    <div class="bookmarks">
      <span class="bm bm-1"><svg class="ic16" viewBox="0 0 16 16"><path fill="none" stroke="#4c8bf5" stroke-width="2" d="M2 15V2c4-1 5 1 7 1s3 0 5-1v9c-3 1-4 0-6 0s-3 0-6 1"/></svg>Icons | Font Aweso...</span>
      <span class="bm bm-2"><svg class="ic16" viewBox="0 0 16 16"><path fill="none" stroke="#e37b52" stroke-width="1.500" d="M6 3L1 8l5 5"/><path fill="none" stroke="#bbb" stroke-width="1.500" d="M10 3l5 5-5 5"/></svg>font-awesome - Lib...</span>
      <span class="bm bm-3"><svg class="ic16" viewBox="0 0 16 16"><path fill="#111" d="M3 4h10v3l-2 9H5L3 7z"/><path fill="#f5c04a" d="M4.500 7h7v2h-7z"/><path fill="#e0559a" d="M5 9h6l-.5 3h-5z"/><path fill="#6d3fa0" d="M5.500 12h5l-.5 3H6z"/><path stroke="#eee" stroke-width="1.500" d="M5 0v4m6-4v4"/></svg>Color Palette: #002...</span>
      <span class="bm bm-4"><svg class="ic16" viewBox="0 0 16 16"><circle cx="8" cy="8" r="8" fill="#16b33e"/><path fill="none" stroke="#0b2a13" stroke-width="2" d="M4 8l3 3 5-6"/></svg>Gym trainer | Templ...</span>
      <span class="bm-more">»</span>
    </div>
    <div class="page">
      <div class="form-card">
        <div class="form-top"></div>
        <div class="form-body">
          <h1 class="form-title">Final term Paper A (CS-311)</h1>
          <p class="form-msg">Your response has been recorded.</p>
          <a class="form-link" href="#">Submit another response</a>
        </div>
      </div>
      <p class="form-foot">This content is neither created nor endorsed by Google. <a href="#">Report Abuse</a> - <a href="#">Terms of Service</a> - <a href="#">Privacy Policy</a></p>
      <div class="forms-logo"><span class="logo-g">Google</span> <span class="logo-f">Forms</span></div>
    </div>
    <div class="activate">
      <div class="activate-head">Activate Windows</div>
      <div class="activate-sub">Go to Settings to activate Windows.</div>
    </div>
  </div>

  <div class="taskbar">
    <div class="task-btn"><svg class="start-ic" viewBox="0 0 16 16"><path fill="#fff" d="M0 2.300l6.500-.9v6.200H0zm7.300-1L16 0v7.600H7.300zM0 8.400h6.500v6.200L0 13.700zm7.300 0H16V16l-8.700-1.200z"/></svg></div>
    <div class="search">
      <svg class="search-ic" viewBox="0 0 16 16"><circle cx="10" cy="6" r="5" fill="none" stroke="#222" stroke-width="1.200"/><path stroke="#222" stroke-width="1.400" d="M6.500 9.500L1 15"/></svg>
      <span class="search-text">Type here to search</span>
      <svg class="doodle" viewBox="0 0 74 32"><path fill="#a8d4f5" stroke="#6d9ec8" d="M2 24L50 4c6-1 8 4 4 7L8 31c-7 2-10-4-6-7z"/><path fill="#f0a36a" d="M13 18l5-2 4 10-5 2z"/><path fill="#333" d="M21 9h5l2 12-5 1zm13-5h5l2 11-5 1z"/><path fill="#2f7fd0" d="M50 29c0-10 4-16 10-16s12 6 13 17z"/><circle cx="61" cy="11" r="4" fill="#2f7fd0"/><path fill="#e8b36a" d="M50 24c7-3 15-3 23 0v2c-8-3-16-3-23 0z"/></svg>
    </div>
    <div class="task-btn"><span class="cortana"></span></div>
    <div class="task-btn"><svg class="taskview" viewBox="0 0 16 16"><path fill="none" stroke="#fff" d="M1.500 4.500h10v7h-10zM1 1.500h10M1 14.500h10M14 1v3M14 12v3"/><path fill="#fff" d="M13 6h3v3h-3z"/></svg></div>
    <div class="task-btn task-open"><svg class="task-ic" viewBox="0 0 24 24"><path fill="#f5b916" d="M1 3h9l2 2h11v17H1z"/><path fill="#ffd966" d="M1 8h22v14H1z"/><path fill="#1f7fd6" d="M7 14l5-4 5 4v8h-3v-4h-4v4H7z"/></svg></div>
    <div class="task-btn task-open task-active"><svg class="task-ic"><use href="#chrome"/></svg></div>
    <div class="tray">
      <svg class="weather" viewBox="0 0 26 24"><circle cx="14" cy="12" r="11" fill="#f6a821"/><path fill="#fff" fill-opacity=".8" d="M8 6h18v1.500H8zM2 11h22v1.500H2zM4 16h16v1.500H4z"/></svg>
      <span class="weather-text">13°C</span>
      <span class="weather-text weather-sky">Smoke</span>
      <svg class="tray-ic tray-chev" viewBox="0 0 14 8"><path fill="none" stroke="#fff" stroke-width="1.200" d="M1 7l6-6 6 6"/></svg>
      <svg class="tray-ic" viewBox="0 0 16 16"><circle cx="8" cy="8" r="8" fill="#2178c4"/><path fill="none" stroke="#fff" d="M1 9h4l2-5 2 8 2-4h4"/><path fill="#2ea043" d="M9 10h7v6H9z"/></svg>
      <svg class="tray-ic" viewBox="0 0 16 16"><path fill="#e4e8ec" d="M3 13a3 3 0 0 1 0-6 5 5 0 0 1 9-1 3.500 3.500 0 0 1 1 7z"/></svg>
      <svg class="tray-ic" viewBox="0 0 16 16"><path fill="none" stroke="#fff" d="M4.500 2.500h11v9h-11zM10 12v2M6 14.500h8M.5 1.500h4v5h-4z"/></svg>
      <svg class="tray-ic" viewBox="0 0 16 16"><path fill="none" stroke="#fff" d="M1.500 5.500h3l4-3v11l-4-3h-3zM11 5c1 2 1 4 0 6M13 3c2 3 2 7 0 10"/></svg>
      <div class="clock"><span>8:42 AM</span><span>15/12/2022</span></div>
      <div class="notif">
        <svg class="notif-ic" viewBox="0 0 16 14"><path fill="#fff" d="M0 0h16v11H5l-3 3v-3H0z"/><path fill="#1c2b3f" d="M3 3h10v1H3zm0 3h10v1H3z"/></svg>
        <span class="notif-count">1</span>
      </div>
    </div>
  </div>
</body>
</html>
```

FILE: styles.css
```css
* {
  box-sizing: border-box;
}

html, body {
  margin: 0;
  height: 1200px;
  overflow: hidden;
}

body {
  position: relative;
  font-family: "Noto Sans", "Open Sans", sans-serif;
  font-size: 12px;
  color: #1a1a1a;
  background: linear-gradient(203deg, #0072d2 0%, #0088e0 22%, #00a6f0 50%, #00b6f9 100%);
}

svg {
  display: block;
  flex: none;
}

.sprite {
  position: absolute;
  width: 0;
  height: 0;
}

.word-w {
  font: bold 15px "Liberation Sans", sans-serif;
  fill: #fff;
  text-anchor: middle;
}

.pdf-tag {
  font: bold 9px "Liberation Sans", sans-serif;
  fill: #fff;
}

.beam {
  position: absolute;
  left: 0;
  top: 0;
  width: 800px;
  height: 1160px;
}

/* desktop icons */
.desktop {
  position: absolute;
  left: 0;
  top: 0;
  display: flex;
}

.desk-col {
  width: 76px;
}

.desk-item {
  position: relative;
  height: 102px;
  padding-top: 8px;
  display: flex;
  flex-direction: column;
  align-items: center;
}

.desk-ic {
  width: 48px;
  height: 48px;
}

.desk-link {
  position: absolute;
  left: 14px;
  top: 43px;
  width: 13px;
  height: 13px;
}

.desk-label {
  width: 76px;
  margin-top: 2px;
  text-align: center;
  color: #fff;
  font-size: 12px;
  letter-spacing: -0.3px;
  line-height: 15px;
  text-shadow: 0 1px 2px #000, 1px 1px 1px #000, 0 0 2px #000;
}

/* explorer window */
.explorer {
  position: absolute;
  left: 326px;
  top: 348px;
  width: 475px;
  height: 632px;
  background: #fff;
  font-size: 11.5px;
  display: flex;
  flex-direction: column;
  box-shadow: 0 2px 8px rgba(0, 0, 0, 0.3);
  overflow: hidden;
}

.ic16 {
  width: 16px;
  height: 16px;
}

.ex-title {
  height: 30px;
  padding-left: 8px;
  padding-bottom: 2px;
  display: flex;
  align-items: center;
}

.ex-sep {
  width: 1px;
  height: 12px;
  margin-left: 7px;
  background: #999;
}

.qat-check {
  margin-left: 9px;
}

.qat-folder {
  margin-left: 6px;
}

.qat-arrow {
  width: 8px;
  height: 8px;
  margin-left: 7px;
}

.ex-title-text {
  margin-left: 7px;
  color: #999;
}

.ex-ribbon {
  height: 24px;
  display: flex;
  border-bottom: 1px solid #dadbdc;
}

.ex-file {
  width: 56px;
  height: 23px;
  line-height: 23px;
  text-align: center;
  color: #fff;
  background: #0a5fb0;
}

.ex-tab {
  line-height: 23px;
  color: #333;
  margin-left: 14px;
  width: 45px;
}

.ex-share {
  margin-left: 15px;
}

.ex-bar {
  height: 42px;
  padding-top: 5px;
  padding-left: 12px;
  display: flex;
  align-items: flex-start;
}

.nav-arrow {
  width: 14px;
  height: 12px;
  margin-top: 9px;
  margin-right: 16px;
}

.nav-drop {
  width: 8px;
  height: 6px;
  margin-top: 11px;
  margin-left: -2px;
  margin-right: 9px;
}

.nav-up {
  width: 12px;
  height: 14px;
  margin-top: 9px;
  margin-right: 7px;
}

.ex-path {
  flex: 1;
  height: 30px;
  padding-bottom: 1px;
  display: flex;
  align-items: center;
  gap: 6px;
  padding-left: 2px;
  border: 1px solid #d9d9d9;
  border-right: none;
}

.path-chev {
  color: #555;
}

.path-name {
  margin-left: 5px;
}

.ex-body {
  flex: 1;
  display: flex;
  min-height: 0;
}

.ex-nav {
  width: 169px;
  padding-top: 16px;
}

.nav-row {
  height: 24px;
  padding-left: 32px;
  padding-bottom: 1px;
  display: flex;
  align-items: center;
  gap: 1px;
  color: #222;
  white-space: nowrap;
}

.nav-root {
  padding-left: 24px;
}

.nav-root .ic16 {
  margin-right: 4px;
}

.nav-row .ic16 {
  margin-right: 4px;
}

.nav-group {
  margin-top: 8px;
}

.nav-selected {
  background: #d9d9d9;
  width: 168px;
}

.nav-name {
  flex: 1;
}

.pin {
  width: 12px;
  height: 12px;
  margin-right: 4px;
}

.ex-scroll {
  width: 15px;
  background: #f0f0f0;
  display: flex;
  flex-direction: column;
}

.scroll-btn {
  width: 15px;
  height: 17px;
}

.scroll-thumb {
  height: 413px;
  background: #cdcdcd;
}

.scroll-rest {
  flex: 1;
}

.ex-list {
  width: 288px;
  margin-left: 3px;
  padding-left: 16px;
  border-left: 1px solid #f0f0f0;
  overflow: hidden;
}

.list-head {
  height: 31px;
  display: flex;
  color: #4c607a;
}

.head-name {
  position: relative;
  flex: none;
  width: 258px;
  height: 24px;
  padding-left: 3px;
  padding-top: 4px;
  border-right: 1px solid #e5e5e5;
}

.sort-mark {
  position: absolute;
  left: 124px;
  top: 0;
  width: 8px;
  height: 5px;
}

.head-date {
  padding-left: 6px;
  padding-top: 4px;
}

.file {
  height: 21px;
  padding-left: 4px;
  display: flex;
  align-items: center;
  gap: 3px;
  color: #1a1a1a;
}

.file-selected {
  background: #d9d9d9;
}

.file-name {
  flex: none;
  width: 236px;
  white-space: nowrap;
}

.file-date {
  flex: none;
  color: #6d6d6d;
}

.ex-status {
  height: 23px;
  display: flex;
  align-items: center;
  color: #333;
}

.status-count {
  width: 68px;
  padding-left: 14px;
  border-right: 1px solid #e5e5e5;
}

.status-sel {
  margin-left: 11px;
  margin-right: 7px;
}

.status-size {
  padding-right: 10px;
  border-right: 1px solid #e5e5e5;
}

/* chrome */
.browser {
  position: absolute;
  left: 801px;
  top: 0;
  width: 799px;
  height: 1160px;
  background: #ede7f6;
  box-shadow: -4px 0 7px rgba(0, 0, 0, 0.18);
  font-size: 11.5px;
}

.tabstrip {
  height: 43px;
  background: #000;
  padding-left: 8px;
  padding-top: 9px;
  display: flex;
}

.tab {
  position: relative;
  width: 104px;
  height: 34px;
  padding: 0 10px 0 13px;
  display: flex;
  align-items: center;
  color: #e8eaed;
}

.tab-active {
  background: #393939;
  border-radius: 8px 8px 0 0;
}

.tab-sep + .tab-sep::before {
  content: "";
  position: absolute;
  left: 0;
  top: 8px;
  width: 1px;
  height: 18px;
  background: #555;
}

.tab-ic {
  width: 16px;
  height: 16px;
  margin-right: 8px;
}

.tab-badge {
  font: bold 8px "Liberation Sans", sans-serif;
  fill: #fff;
  text-anchor: middle;
}

.tab-title {
  width: 40px;
  overflow: hidden;
  white-space: nowrap;
  -webkit-mask-image: linear-gradient(to right, #000 70%, transparent);
  mask-image: linear-gradient(to right, #000 70%, transparent);
}

.tab-x {
  width: 10px;
  height: 10px;
  margin-left: 8px;
}

.new-tab {
  width: 14px;
  height: 14px;
  margin-top: 10px;
  margin-left: 15px;
}

.win-ctrl {
  margin-left: auto;
  margin-top: -9px;
  display: flex;
  gap: 35px;
  padding-right: 17px;
  padding-top: 10px;
}

.ctrl-ic {
  width: 12px;
  height: 12px;
}

.toolbar {
  height: 36px;
  background: #393939;
  padding-left: 14px;
  display: flex;
  align-items: center;
}

.tool-ic {
  width: 16px;
  height: 16px;
}

.tool-fwd {
  margin-left: 16px;
}

.tool-reload {
  margin-left: 16px;
}

.omnibox {
  width: 516px;
  height: 30px;
  margin-left: 15px;
  padding-left: 12px;
  border-radius: 15px;
  background: #202124;
  display: flex;
  align-items: center;
  color: #9aa0a6;
}

.lock {
  width: 10px;
  height: 13px;
}

.url {
  width: 410px;
  margin-left: 11px;
  font-family: "Roboto", sans-serif;
  font-size: 13.6px;
  white-space: nowrap;
}

.url-host {
  color: #e8eaed;
}

.omni-ic {
  width: 16px;
  height: 16px;
  margin-left: 16px;
}

.omni-ic + .omni-ic {
  margin-left: 17px;
}

.tool-pen {
  margin-left: 13px;
}

.tool-ext {
  margin-left: 18px;
}

.tool-side {
  margin-left: 16px;
}

.avatar {
  width: 22px;
  height: 22px;
  margin-left: 13px;
  border-radius: 50%;
  background: #e8710a;
  color: #fff;
  text-align: center;
  line-height: 21px;
  font-size: 12px;
}

.tool-dots {
  width: 4px;
  margin-left: 19px;
}

.bookmarks {
  height: 33px;
  background: #393939;
  border-bottom: 1px solid #4d4d4d;
  display: flex;
  align-items: center;
  padding-left: 14px;
  padding-bottom: 6px;
  color: #e8eaed;
}

.bm {
  display: flex;
  align-items: center;
  gap: 8px;
  white-space: nowrap;
}

.bm-1 {
  width: 148px;
}

.bm-2 {
  width: 154px;
}

.bm-3 {
  width: 149px;
  gap: 7px;
}

.bm-4 {
  width: 304px;
}

.bm-more {
  font-size: 15px;
  margin-left: 1px;
}

.page {
  padding-top: 12px;
  padding-right: 2px;
  display: flex;
  flex-direction: column;
  align-items: center;
  font-family: "Roboto", sans-serif;
}

.form-card {
  width: 640px;
  background: #fff;
  border-radius: 8px;
  overflow: hidden;
  border: 1px solid #dadce0;
  border-top: none;
}

.form-top {
  height: 10px;
  background: #673ab7;
}

.form-body {
  padding: 25px 24px 25px;
}

.form-title {
  margin: 0;
  font-size: 32px;
  font-weight: 400;
  line-height: 44px;
  color: #202124;
}

.form-msg {
  margin: 14px 0 0;
  font-size: 14.4px;
  line-height: 20px;
  color: #202124;
}

.form-link {
  display: block;
  margin-top: 24px;
  font-size: 14px;
  line-height: 20px;
  color: #4285f4;
}

.form-foot {
  margin: 15px 0 0;
  font-size: 12px;
  line-height: 16px;
  color: #70757a;
}

.form-foot a {
  color: #5f6368;
}

.forms-logo {
  margin-top: 17px;
  font-size: 22.5px;
  line-height: 32px;
  color: #5f6368;
}

.logo-g {
  font-family: "Open Sans", sans-serif;
  font-weight: 600;
  letter-spacing: -1px;
}

.activate {
  position: absolute;
  left: 494px;
  top: 1060px;
  font-family: "Noto Sans", sans-serif;
  color: #a9a4b4;
}

.activate-head {
  font-size: 19.2px;
  line-height: 26px;
}

.activate-sub {
  margin-top: 0;
  font-size: 14.1px;
  line-height: 18px;
}

/* taskbar */
.taskbar {
  position: absolute;
  left: 0;
  bottom: 0;
  width: 1600px;
  height: 40px;
  background: linear-gradient(to right, #20343f, #1c2b3f);
  display: flex;
  color: #fff;
}

.task-btn {
  width: 48px;
  height: 40px;
  display: flex;
  align-items: center;
  justify-content: center;
}

.start-ic {
  width: 16px;
  height: 16px;
}

.search {
  width: 344px;
  height: 40px;
  background: #f2f2f2;
  border: 1px solid #b8bcbf;
  display: flex;
  align-items: center;
  padding-left: 12px;
  color: #333;
}

.search-ic {
  width: 16px;
  height: 16px;
}

.search-text {
  margin-left: 11px;
  font-size: 14.1px;
}

.doodle {
  width: 74px;
  height: 32px;
  margin-left: auto;
  margin-right: 2px;
  margin-top: 6px;
}

.cortana {
  width: 16px;
  height: 16px;
  border-radius: 50%;
  border: 3px solid #fff;
}

.taskview {
  width: 16px;
  height: 16px;
}

.task-ic {
  width: 24px;
  height: 24px;
}

.task-open {
  border-bottom: 2px solid #76b9ed;
  margin-left: 2px;
  width: 47px;
}

.task-active {
  background: #4b5c67;
}

.tray {
  margin-left: auto;
  display: flex;
  align-items: center;
  height: 40px;
}

.weather {
  width: 26px;
  height: 24px;
  margin-right: 9px;
}

.weather-text {
  font-size: 14px;
}

.weather-sky {
  margin-left: 8px;
  margin-right: 11px;
}

.tray-ic {
  width: 16px;
  height: 16px;
  margin: 0 4px;
}

.tray-chev {
  width: 14px;
  height: 8px;
  margin: 0 5px;
}

.clock {
  width: 70px;
  display: flex;
  flex-direction: column;
  align-items: center;
  line-height: 19px;
}

.notif {
  position: relative;
  width: 53px;
  height: 40px;
  padding-left: 12px;
  padding-top: 11px;
}

.notif-ic {
  width: 16px;
  height: 14px;
}

.notif-count {
  position: absolute;
  left: 20px;
  top: 19px;
  width: 16px;
  height: 16px;
  border-radius: 50%;
  background: #444;
  border: 1px solid #666;
  font-size: 10px;
  line-height: 14px;
  text-align: center;
}
```
